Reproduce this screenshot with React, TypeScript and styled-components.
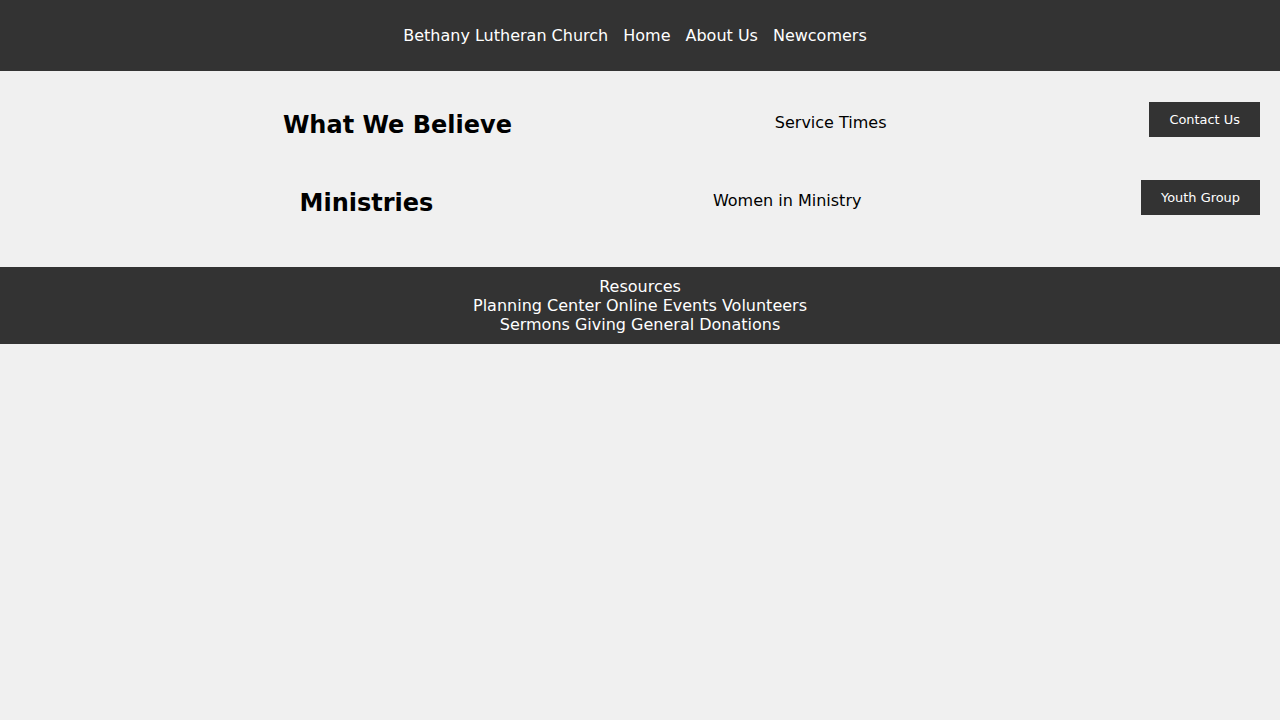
import React from 'react';
import styled, { createGlobalStyle } from 'styled-components';

const GlobalStyle = createGlobalStyle`
  html, body {
    margin: 0;
    padding: 0;
    background: #f0f0f0;
    font-family: 'DejaVu Sans', 'Liberation Sans', sans-serif;
    color: #000;
  }
`;

const Header = styled.header`
  background: #333;
  padding: 16px 0;
`;

const Nav = styled.nav`
  display: flex;
  justify-content: center;
  gap: 15px;
  padding-right: 10px;
`;

const NavLink = styled.a`
  display: block;
  padding: 10px 0;
  color: #fff;
  font-size: 16px;
  text-decoration: none;
`;

const Main = styled.main`
  padding: 20px;
`;

const Row = styled.section`
  display: flex;
  align-items: flex-start;
  margin-bottom: 10px;
`;

const Cell = styled.div`
  flex: 1 1 auto;
  display: flex;
  justify-content: flex-end;
`;

const Title = styled.h2`
  margin: 20px 0;
  font-size: 24px;
  font-weight: bold;
`;

const Text = styled.p`
  margin: 22px 0 0;
  font-size: 16px;
`;

const ActionButton = styled.button`
  margin-top: 11px;
  padding: 10px 20px;
  border: none;
  background: #333;
  color: #fff;
  font-family: inherit;
  font-size: 12.93px;
  cursor: pointer;
`;

const Footer = styled.footer`
  background: #333;
  color: #fff;
  text-align: center;
  padding: 10px;
  font-size: 16px;
  line-height: 19px;
`;

const links = ['Bethany Lutheran Church', 'Home', 'About Us', 'Newcomers'];

const rows = [
  { title: 'What We Believe', text: 'Service Times', action: 'Contact Us' },
  { title: 'Ministries', text: 'Women in Ministry', action: 'Youth Group' },
];

const footerLines = [
  'Resources',
  'Planning Center Online Events Volunteers',
  'Sermons Giving General Donations',
];

export default function App() {
  return (
    <>
      <GlobalStyle />
      <Header>
        <Nav>
          {links.map(l => (
            <NavLink key={l} href="#">{l}</NavLink>
          ))}
        </Nav>
      </Header>
      <Main>
        {rows.map(r => (
          <Row key={r.title}>
            <Cell><Title>{r.title}</Title></Cell>
            <Cell><Text>{r.text}</Text></Cell>
            <Cell><ActionButton>{r.action}</ActionButton></Cell>
          </Row>
        ))}
      </Main>
      <Footer>
        {footerLines.map(line => (
          <div key={line}>{line}</div>
        ))}
      </Footer>
    </>
  );
}
